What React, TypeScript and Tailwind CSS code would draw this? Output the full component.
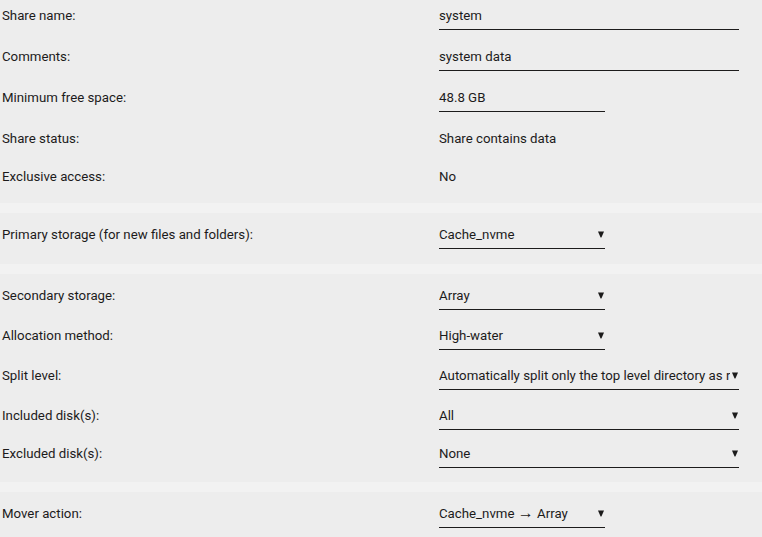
import React from "react";

function Arrow() {
  return (
    <svg width="6" height="7" viewBox="0 0 6 7" className="shrink-0">
      <polygon points="0,0.5 6,0.5 3.4,6.5 2.6,6.5" fill="#1c1b1b" />
    </svg>
  );
}

function Row({ label, h, children }: { label: string; h: string; children: React.ReactNode }) {
  return (
    <div className={`flex ${h}`}>
      <div className="w-[437px] shrink-0 leading-[32px]">{label}</div>
      <div className="min-w-0">{children}</div>
    </div>
  );
}

function Input({ value, wide }: { value: string; wide?: boolean }) {
  return (
    <div className={`${wide ? "w-[300px]" : "w-[166px]"} h-[30px] leading-[32px] border-b border-[#1c1b1b]`}>
      {value}
    </div>
  );
}

function Select({ value, wide }: { value: React.ReactNode; wide?: boolean }) {
  return (
    <div
      className={`${wide ? "w-[300px]" : "w-[166px]"} h-[30px] pt-[2px] flex items-center gap-[2px] pr-[1px] border-b border-[#1c1b1b]`}
    >
      <span className="flex-1 min-w-0 overflow-hidden whitespace-nowrap leading-[28px]">{value}</span>
      <Arrow />
    </div>
  );
}

export default function App() {
  return (
    <div
      className="w-[762px] h-[537px] overflow-hidden bg-[#f2f2f2] text-[13.25px] text-[#1c1b1b]"
      style={{ fontFamily: "Roboto, 'Liberation Sans', sans-serif" }}
    >
      <div className="bg-[#ededed] pl-[2px] pb-[4px]">
        <Row label="Share name:" h="h-[41px]">
          <Input value="system" wide />
        </Row>
        <Row label="Comments:" h="h-[41px]">
          <Input value="system data" wide />
        </Row>
        <Row label="Minimum free space:" h="h-[41px]">
          <Input value="48.8 GB" />
        </Row>
        <Row label="Share status:" h="h-[38px]">
          <div className="leading-[32px]">Share contains data</div>
        </Row>
        <Row label="Exclusive access:" h="h-[38px]">
          <div className="leading-[32px]">No</div>
        </Row>
      </div>

      <div className="mt-[10px] bg-[#ededed] pl-[2px] pt-[6px] pb-[4px]">
        <Row label="Primary storage (for new files and folders):" h="h-[41px]">
          <Select value="Cache_nvme" />
        </Row>
      </div>

      <div className="mt-[10px] bg-[#ededed] pl-[2px] pt-[6px] pb-[4px]">
        <Row label="Secondary storage:" h="h-[40px]">
          <Select value="Array" />
        </Row>
        <Row label="Allocation method:" h="h-[40px]">
          <Select value="High-water" />
        </Row>
        <Row label="Split level:" h="h-[40px]">
          <Select value="Automatically split only the top level directory as required" wide />
        </Row>
        <Row label="Included disk(s):" h="h-[38px]">
          <Select value="All" wide />
        </Row>
        <Row label="Excluded disk(s):" h="h-[40px]">
          <Select value="None" wide />
        </Row>
      </div>

      <div className="mt-[10px] bg-[#ededed] pl-[2px] pt-[6px] h-[60px]">
        <Row label="Mover action:" h="h-[40px]">
          <Select
            value={
              <>
                Cache_nvme{" "}
                <span className="text-[16px] leading-none" style={{ fontFamily: "'Liberation Sans', sans-serif" }}>
                  →
                </span>{" "}
                Array
              </>
            }
          />
        </Row>
      </div>
    </div>
  );
}
